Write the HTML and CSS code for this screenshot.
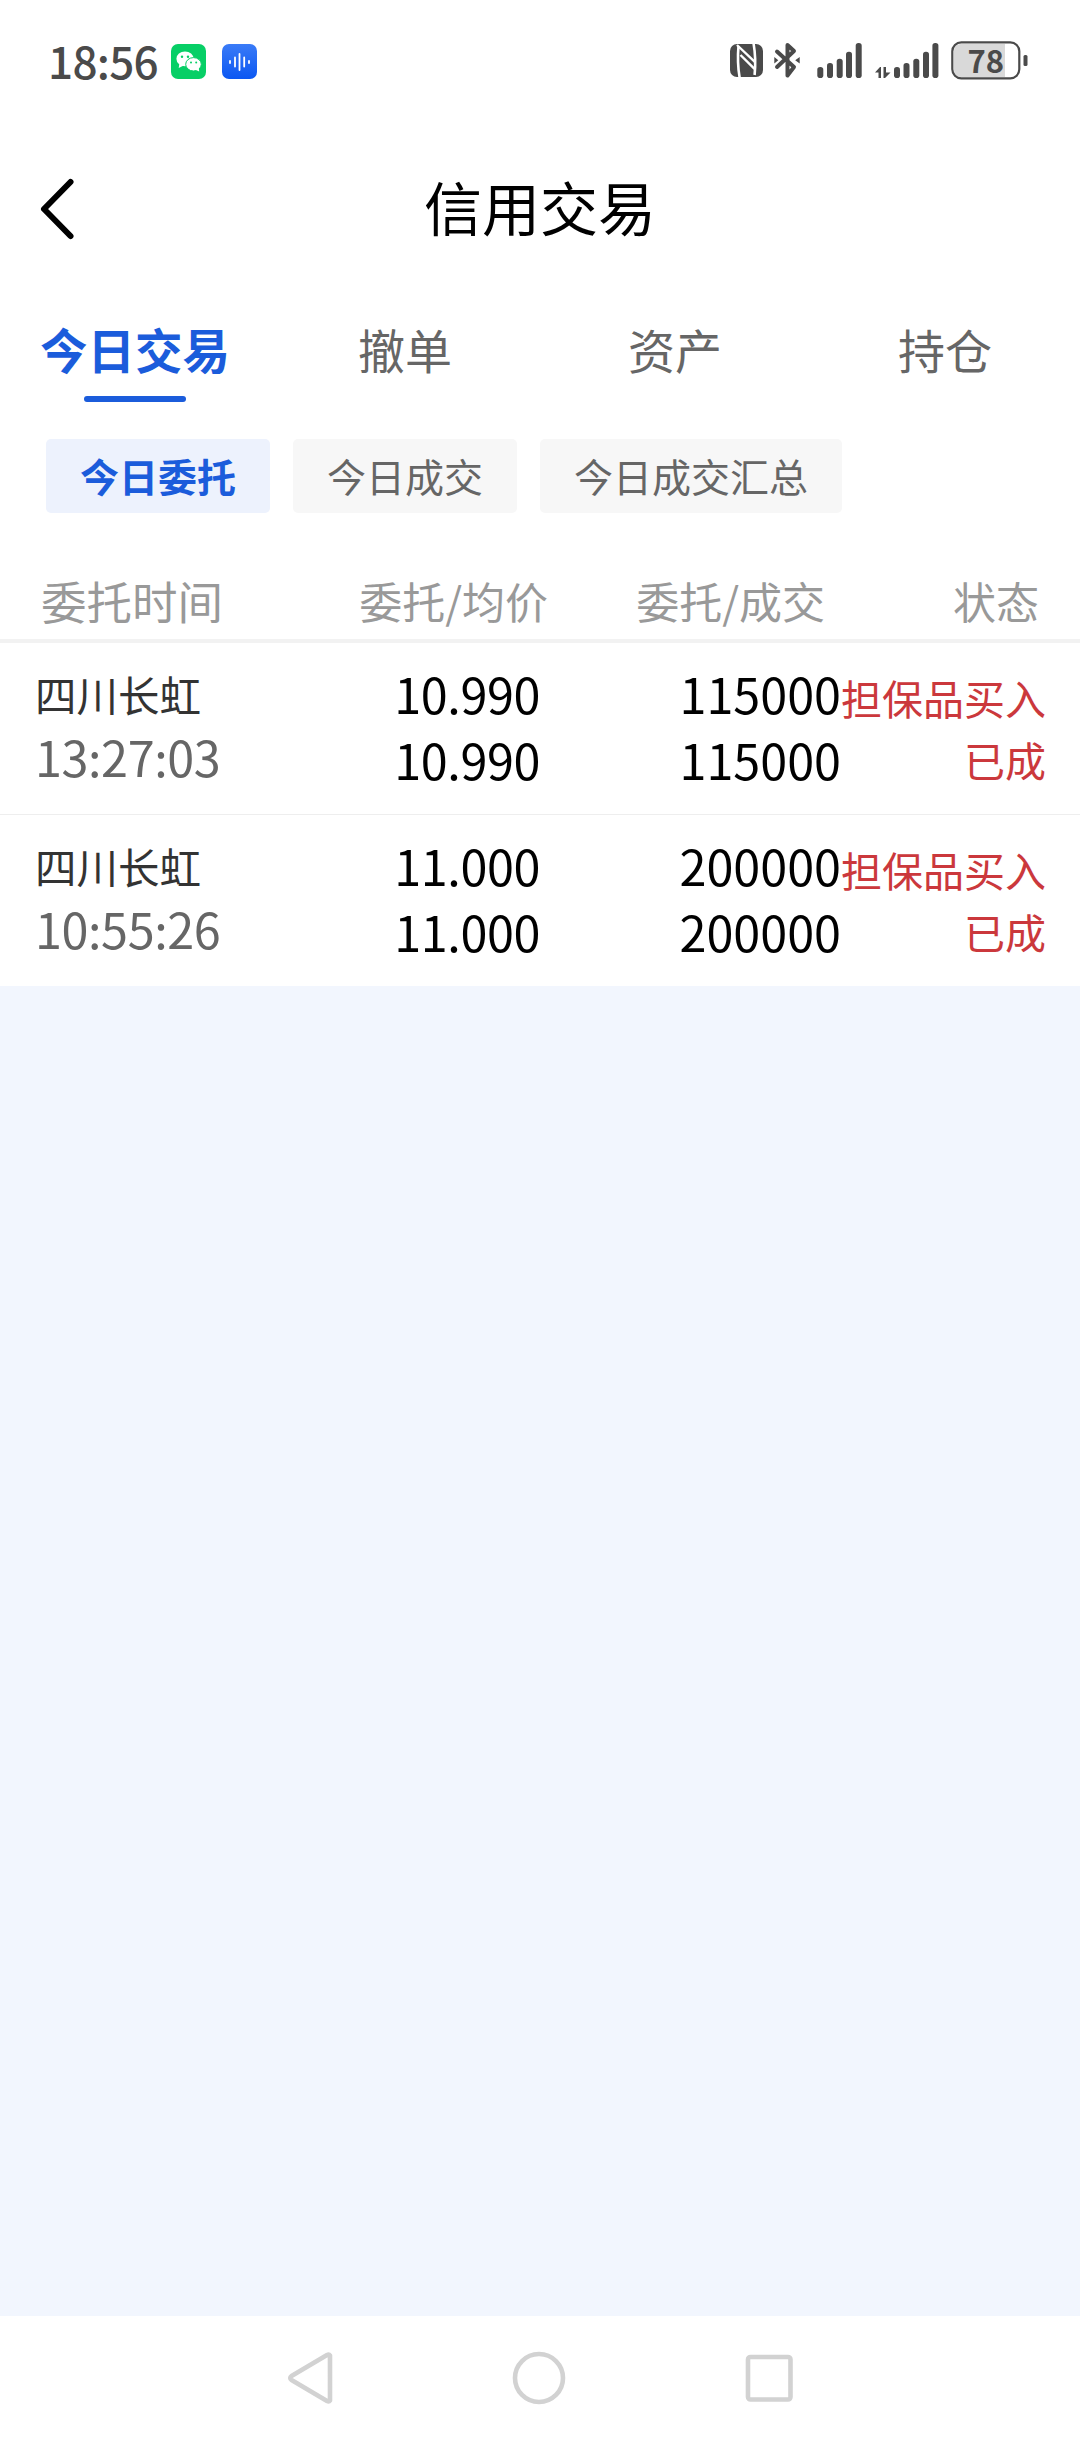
FILE: index.html
```html
<!DOCTYPE html>
<html lang="zh-CN">
<head>
  <meta charset="UTF-8" />
  <title>信用交易</title>
  <link rel="stylesheet" href="styles.css">
</head>
<body>
  <div class="status-bar">
    <span class="clock">18:56</span>
    <svg class="app-icon" width="36" height="36" viewBox="0 0 36 36">
      <rect width="35" height="35" rx="7" fill="#07cf66"/>
      <ellipse cx="14" cy="14.8" rx="8.6" ry="7.4" fill="#fff"/>
      <path d="M8.5 19l-.8 5 5-2.6z" fill="#fff"/>
      <circle cx="11" cy="12.8" r="1.2" fill="#07cf66"/>
      <circle cx="17" cy="12.8" r="1.2" fill="#07cf66"/>
      <ellipse cx="22.500" cy="20.300" rx="7.800" ry="6.700" fill="#fff" stroke="#07cf66" stroke-width="1"/>
      <path d="M24 25.600l4.200 2-.5-4z" fill="#fff"/>
      <circle cx="20" cy="18.600" r="1" fill="#07cf66"/>
      <circle cx="25.200" cy="18.600" r="1" fill="#07cf66"/>
    </svg>
    <svg class="app-icon" width="36" height="36" viewBox="0 0 36 36">
      <defs>
        <linearGradient id="voice" x1="0" y1="0" x2="0" y2="1">
          <stop offset="0" stop-color="#3a7bf7"/>
          <stop offset="1" stop-color="#0b57f2"/>
        </linearGradient>
      </defs>
      <rect width="35" height="35" rx="7" fill="url(#voice)"/>
      <path d="M8 17v2M13 13.500v9M17.500 10v16M22.200 13.500v9M27 17v2" stroke="#fff" stroke-width="1.800" stroke-linecap="round"/>
    </svg>

    <svg class="status-right" width="300" height="60" viewBox="730 30 300 60" fill="#4a4a4a">
      <!-- nfc -->
      <rect x="730" y="44" width="33" height="33" rx="7"/>
      <path d="M738.500 46C737.600 56 737.800 67 739.600 77.400M753.600 43.600C755.400 54 755.600 65 754.600 75" fill="none" stroke="#fff" stroke-width="2.600"/>
      <path d="M737 45l17.800 16.800M740.500 55l14 13.800" fill="none" stroke="#fff" stroke-width="2.400"/>
      <!-- bluetooth -->
      <path d="M777 51.500l17 15.500-6.500 8.500V45l6.500 6-17 16" fill="none" stroke="#4a4a4a" stroke-width="4" stroke-linecap="round" stroke-linejoin="round"/>
      <path d="M774.300 57l4 3.300-4 3.300zM799.700 57l-4.500 3.300 4.500 3.300z"/>
      <!-- signal 1 -->
      <rect x="817.300" y="67" width="6" height="11" rx="2.800"/>
      <rect x="827" y="63" width="6" height="15" rx="2.800"/>
      <rect x="836.700" y="58.700" width="6" height="19.300" rx="2.800"/>
      <rect x="846" y="51.700" width="6" height="26.300" rx="2.800"/>
      <rect x="855.700" y="43" width="6" height="35" rx="2.800"/>
      <!-- data arrows -->
      <path d="M875 72.500l5-5.500h1v11h-2.500v-5.500zM883.500 67h2.500v5.500h4.500l-5.500 5.500h-1.500z"/>
      <!-- signal 2 -->
      <rect x="894" y="67" width="6" height="11" rx="2.800"/>
      <rect x="903.500" y="63" width="6" height="15" rx="2.800"/>
      <rect x="913.300" y="58.700" width="6" height="19.300" rx="2.800"/>
      <rect x="923" y="51.700" width="6" height="26.300" rx="2.800"/>
      <rect x="932.400" y="43" width="6" height="35" rx="2.800"/>
      <!-- battery -->
      <path d="M961 44h44v33h-44q-7 0-7-7v-19q0-7 7-7z" fill="#d9d9d9"/>
      <rect x="952.300" y="42.300" width="67" height="36" rx="9" fill="none" stroke="#4a4a4a" stroke-width="2.200"/>
      <rect x="1023.500" y="55" width="4" height="11" rx="1.500"/>
      <text class="battery-text" x="985.700" y="72.600" text-anchor="middle">78</text>
    </svg>
  </div>

  <header class="title-bar">
    <svg class="back" width="36" height="64" viewBox="0 0 36 64">
      <path d="M31.500 5L5 32l26.500 27" fill="none" stroke="#000" stroke-width="6" stroke-linecap="round" stroke-linejoin="round"/>
    </svg>
    <h1>信用交易</h1>
  </header>

  <nav class="tabs">
    <a class="tab active">今日交易</a>
    <a class="tab">撤单</a>
    <a class="tab">资产</a>
    <a class="tab">持仓</a>
  </nav>

  <div class="chips">
    <span class="chip active">今日委托</span>
    <span class="chip">今日成交</span>
    <span class="chip">今日成交汇总</span>
  </div>

  <div class="grid table-head">
    <span class="first">委托时间</span>
    <span>委托/均价</span>
    <span>委托/成交</span>
    <span>状态</span>
  </div>

  <div class="grid row">
    <div class="stock">
      <div class="name">四川长虹</div>
      <div class="time">13:27:03</div>
    </div>
    <div class="num price">
      <div>10.990</div>
      <div>10.990</div>
    </div>
    <div class="num">
      <div>115000</div>
      <div>115000</div>
    </div>
    <div class="state">
      <div>担保品买入</div>
      <div>已成</div>
    </div>
  </div>

  <div class="grid row">
    <div class="stock">
      <div class="name">四川长虹</div>
      <div class="time">10:55:26</div>
    </div>
    <div class="num price">
      <div>11.000</div>
      <div>11.000</div>
    </div>
    <div class="num">
      <div>200000</div>
      <div>200000</div>
    </div>
    <div class="state">
      <div>担保品买入</div>
      <div>已成</div>
    </div>
  </div>

  <footer class="nav-bar">
    <svg width="46" height="54" viewBox="0 0 46 54">
      <path d="M43 4.500v45q-1 1.500-3 .5L4.500 29q-2.500-2 0-4L40 4q2-1 3 .5z" fill="none" stroke="#d2d2d2" stroke-width="4.600" stroke-linejoin="round"/>
    </svg>
    <svg width="54" height="54" viewBox="0 0 54 54">
      <circle cx="27" cy="27" r="24" fill="none" stroke="#d2d2d2" stroke-width="4.600"/>
    </svg>
    <svg width="48" height="48" viewBox="0 0 48 48">
      <rect x="3" y="3" width="42.500" height="42.500" rx="2.500" fill="none" stroke="#d2d2d2" stroke-width="4.600"/>
    </svg>
  </footer>
</body>
</html>
```

FILE: styles.css
```css
* {
  box-sizing: border-box;
}

body {
  margin: 0;
  height: 2440px;
  display: flex;
  flex-direction: column;
  background-color: #f2f6fe;
  font-family: "Noto Sans CJK SC", sans-serif;
  color: #000;
}

/* status bar */
.status-bar {
  height: 120px;
  padding: 0 50px 0 48px;
  display: flex;
  align-items: center;
  background-color: #fff;
}

.clock {
  width: 123px;
  font-size: 44px;
  line-height: 60px;
  font-weight: 500;
  letter-spacing: -0.7px;
  color: #4a4a4a;
}

.app-icon {
  margin: 4px 15px 0 0;
}

.status-right {
  margin-left: auto;
}

.battery-text {
  font-size: 31px;
  font-weight: 700;
}

/* title */
.title-bar {
  height: 178px;
  padding: 0 39px;
  display: grid;
  grid-template-columns: 36px 1fr 36px;
  align-items: start;
  background-color: #fff;
}

.back {
  margin-top: 57px;
}

h1 {
  margin: 46px 0 0;
  font-size: 58px;
  line-height: 80px;
  font-weight: 400;
  text-align: center;
}

/* tabs */
.tabs {
  height: 104px;
  display: grid;
  grid-template-columns: repeat(4, 1fr);
  background-color: #fff;
}

.tab {
  display: flex;
  flex-direction: column;
  align-items: center;
  padding-top: 18px;
  font-size: 47px;
  line-height: 66px;
  color: #666;
}

.tab.active {
  font-size: 47.5px;
  font-weight: 700;
  color: #1b5cdb;
}

.tab.active::after {
  content: "";
  width: 102px;
  height: 6px;
  margin-top: 14px;
  border-radius: 3px;
  background-color: #1b5cdb;
}

/* filter chips */
.chips {
  display: flex;
  gap: 23px;
  padding: 37px 46px 41px;
  background-color: #fff;
}

.chip {
  height: 74px;
  padding: 0 34px;
  border-radius: 5px;
  background-color: #f7f7f7;
  font-size: 39px;
  line-height: 72px;
  color: #666;
}

.chip.active {
  background-color: #edf2fd;
  font-weight: 700;
  color: #1b5cdb;
}

/* orders */
.grid {
  display: grid;
  grid-template-columns: 240px 300px 301px 1fr;
  background-color: #fff;
}

.table-head {
  height: 89px;
  border-bottom: 4px solid #f2f2f2;
  font-size: 43px;
  line-height: 92px;
  color: #999;
  text-align: right;
}

.table-head .first {
  padding-left: 41px;
  font-size: 45.5px;
  text-align: left;
}

.table-head span:nth-child(2) {
  margin-right: -8px;
}

.table-head span:nth-child(3) {
  padding-right: 16px;
}

.table-head span:nth-child(4) {
  padding-right: 41px;
}

.row {
  height: 171px;
  padding-top: 17px;
}

.row + .row {
  height: 172px;
  border-top: 1px solid #eee;
}

.stock {
  padding: 4px 0 0 35px;
}

.name {
  font-size: 41.5px;
  line-height: 60px;
  color: #333;
}

.time {
  line-height: 64px;
  font-size: 48.5px;
  letter-spacing: -0.4px;
  color: #666;
}

.num {
  font-size: 48.5px;
  line-height: 66px;
  text-align: right;
}

.price {
  letter-spacing: -0.4px;
}

.state {
  padding: 6px 35px 0 0;
  font-size: 41px;
  line-height: 62px;
  text-align: right;
  white-space: nowrap;
  color: #cb383c;
}

/* system navigation */
.nav-bar {
  height: 124px;
  margin-top: auto;
  padding: 0 287px;
  display: flex;
  justify-content: space-between;
  align-items: center;
  background-color: #fff;
}
```
